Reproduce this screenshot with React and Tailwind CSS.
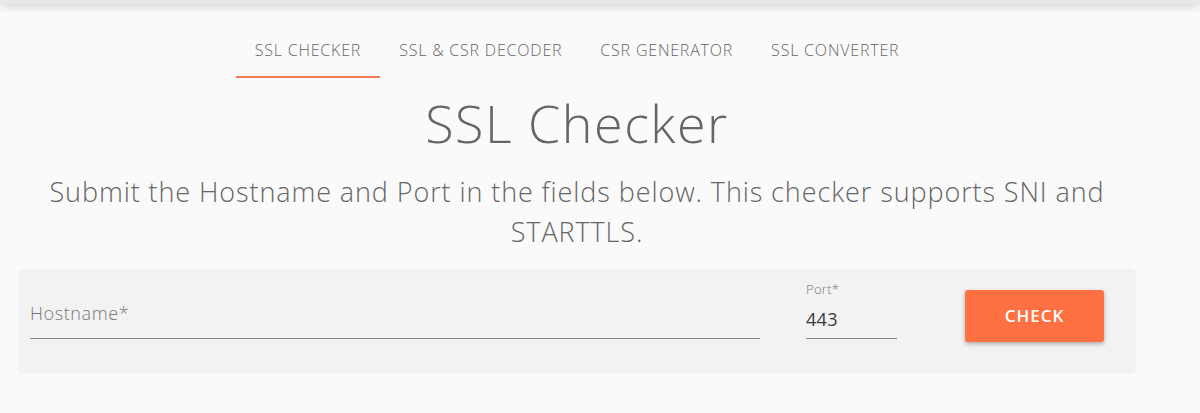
import React from 'react';

const tabs = ['SSL CHECKER', 'SSL & CSR DECODER', 'CSR GENERATOR', 'SSL CONVERTER'];

export default function App() {
  return (
    <div className="min-h-[413px] w-[1200px] overflow-hidden bg-[#fafafa] font-['Open_Sans','Noto_Sans',sans-serif] text-[#666]">
      {/* header edge above the fold */}
      <div className="relative z-10 h-[3px] bg-[#e9e9e9] shadow-[0_2px_8px_rgba(0,0,0,0.35)]" />

      <div className="ml-[18px] w-[1118px]">
        <nav className="mt-[36px] flex justify-center">
          {tabs.map((t, i) => (
            <div
              key={t}
              className={
                'px-[19px] pb-[15px] text-[16px] font-light leading-[22px] tracking-[0.8px] text-[#666] ' +
                (i === 0 ? 'border-b-2 border-[#ef7a55]' : 'border-b-2 border-transparent')
              }
            >
              {t}
            </div>
          ))}
        </nav>

        <h1 className="mt-[13px] text-center text-[52px] font-light leading-[64px] tracking-[1.5px] text-[#666]">
          SSL Checker
        </h1>

        <p className="mx-auto mt-[17px] w-[1090px] text-center text-[27px] font-light leading-[40px] tracking-[0.9px] text-[#666]">
          Submit the Hostname and Port in the fields below. This checker supports SNI and STARTTLS.
        </p>

        <div className="mt-[17px] flex h-[105px] items-start rounded-[5px] bg-[#f2f2f2] pl-[12px]">
          <div className="mt-[32px] w-[730px] border-b border-[#888] pb-[13px]">
            <div className="text-[18px] font-light leading-[24px] tracking-[0.6px] text-[#777]">Hostname*</div>
          </div>
          <div className="ml-[46px] mt-[12px] w-[91px] border-b border-[#888] pb-[7px]">
            <div className="text-[13px] font-light leading-[16px] tracking-[0.3px] text-[#777]">Port*</div>
            <div className="mt-[10px] text-[18px] leading-[24px] tracking-[0.3px] text-[#3a3a3a]">443</div>
          </div>
          <button className="ml-[68px] mt-[21px] h-[52px] w-[139px] rounded-[3px] bg-[#ff7043] text-[17px] font-semibold tracking-[1px] text-white shadow-[0_2px_4px_rgba(0,0,0,0.3)]">
            CHECK
          </button>
        </div>
      </div>
    </div>
  );
}
